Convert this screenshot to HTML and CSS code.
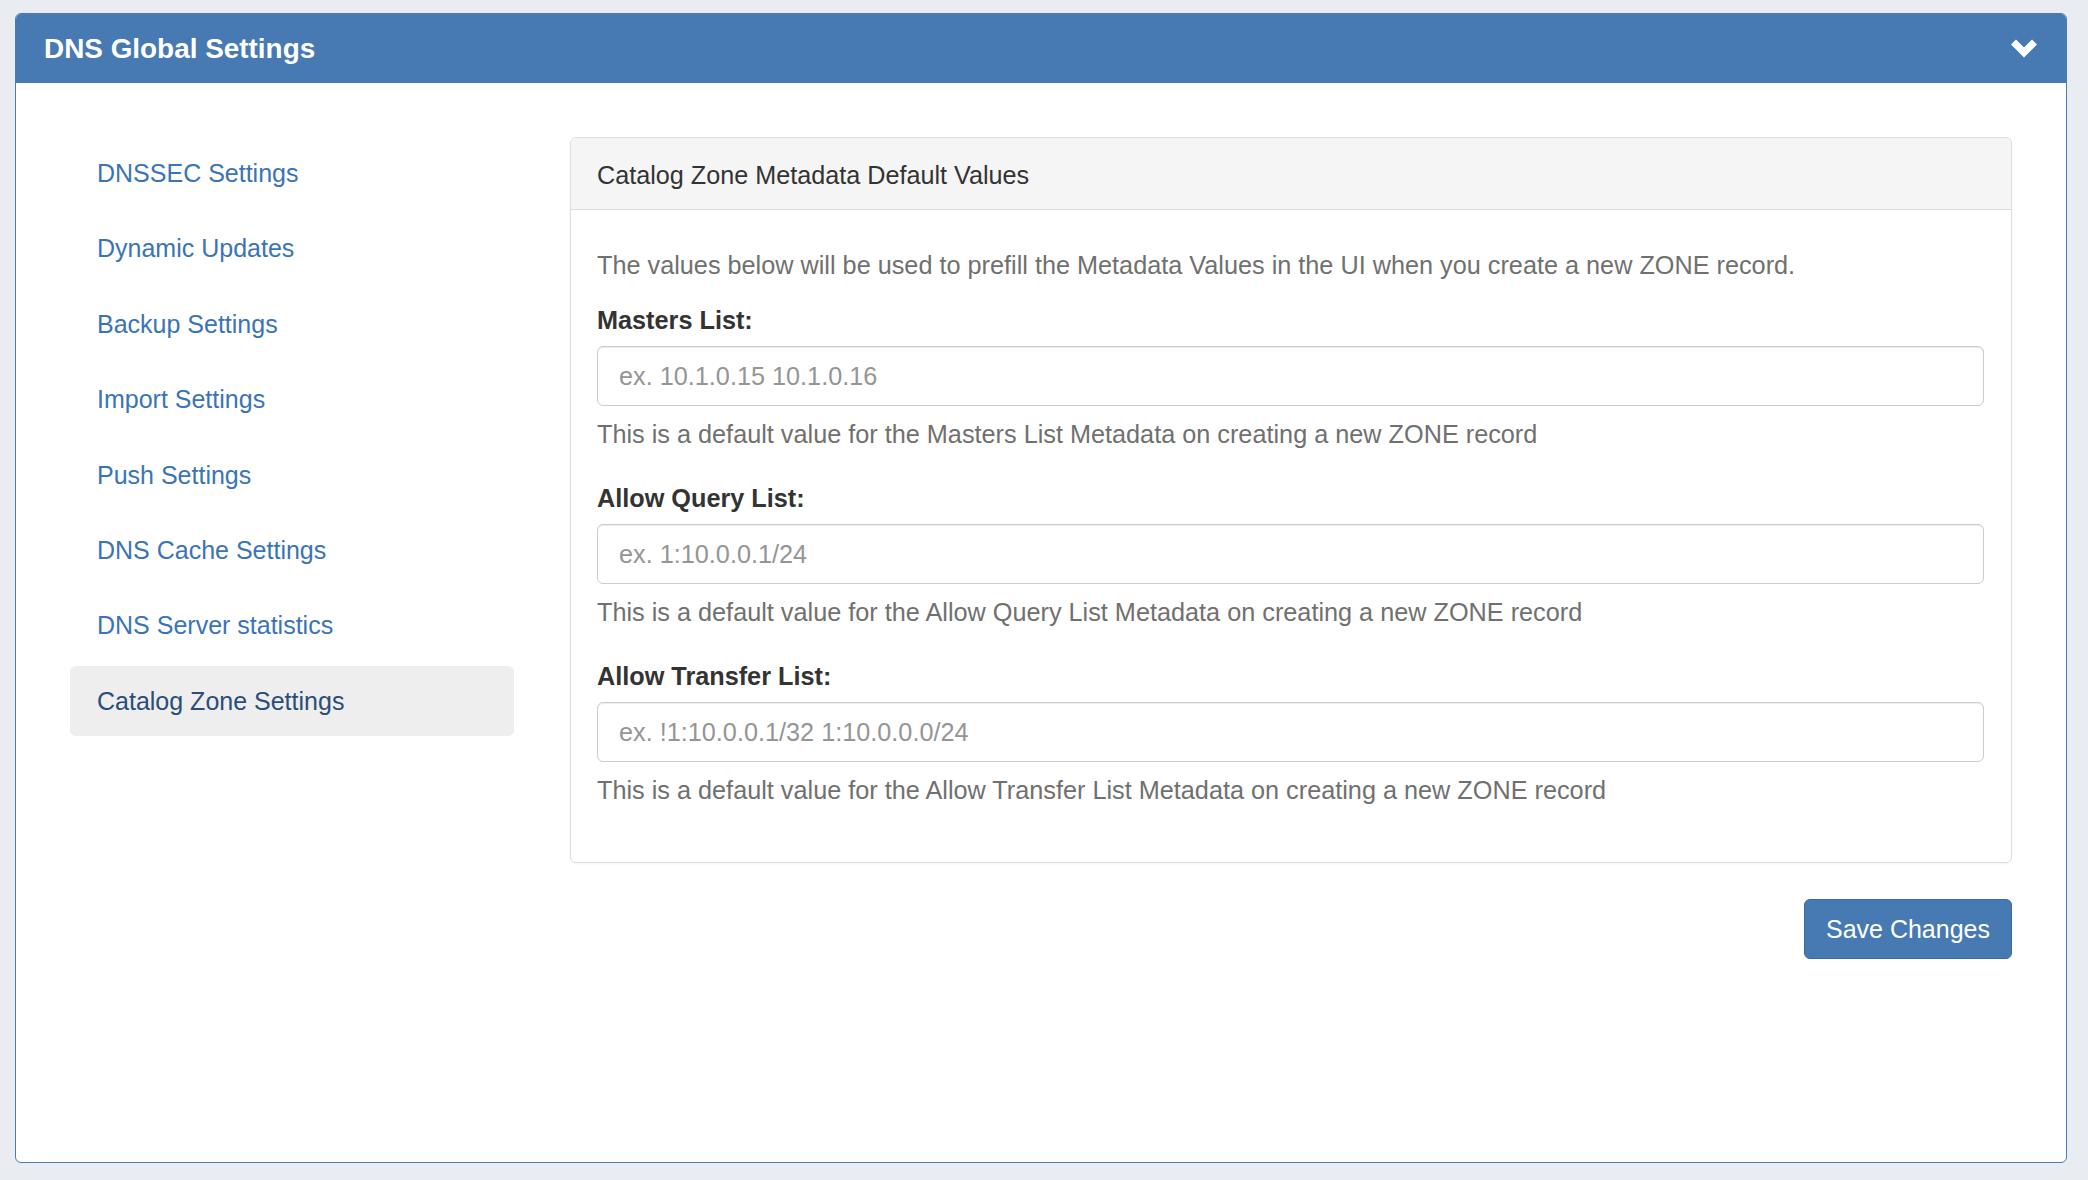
FILE: index.html
```html
<!DOCTYPE html>
<html lang="en">

<head>
    <meta charset="UTF-8">
    <meta name="viewport" content="width=device-width, initial-scale=1.0">
    <title>DNS Global Settings</title>
    <link rel="stylesheet" href="styles.css">
</head>

<body>
    <div class="panel">
        <div class="panel-heading">
            <h3 class="panel-title">DNS Global Settings</h3>
            <svg class="chevron" width="28" height="20" viewBox="0 0 28 20">
                <polyline points="3.5,3 14,13.5 24.5,3" fill="none" stroke="#fff" stroke-width="7" stroke-linejoin="miter"></polyline>
            </svg>
        </div>
        <div class="panel-body">
            <ul class="side-nav">
                <li><a href="#">DNSSEC Settings</a></li>
                <li><a href="#">Dynamic Updates</a></li>
                <li><a href="#">Backup Settings</a></li>
                <li><a href="#">Import Settings</a></li>
                <li><a href="#">Push Settings</a></li>
                <li><a href="#">DNS Cache Settings</a></li>
                <li><a href="#">DNS Server statistics</a></li>
                <li class="active"><a href="#">Catalog Zone Settings</a></li>
            </ul>
            <div class="content">
                <div class="card">
                    <div class="card-heading">Catalog Zone Metadata Default Values</div>
                    <div class="card-body">
                        <p class="intro">The values below will be used to prefill the Metadata Values in the UI when you create a new ZONE record.</p>
                        <div class="form-group">
                            <label for="masters">Masters List:</label>
                            <input type="text" id="masters" class="form-control" placeholder="ex. 10.1.0.15 10.1.0.16">
                            <span class="help-block">This is a default value for the Masters List Metadata on creating a new ZONE record</span>
                        </div>
                        <div class="form-group">
                            <label for="query">Allow Query List:</label>
                            <input type="text" id="query" class="form-control" placeholder="ex. 1:10.0.0.1/24">
                            <span class="help-block">This is a default value for the Allow Query List Metadata on creating a new ZONE record</span>
                        </div>
                        <div class="form-group">
                            <label for="transfer">Allow Transfer List:</label>
                            <input type="text" id="transfer" class="form-control" placeholder="ex. !1:10.0.0.1/32 1:10.0.0.0/24">
                            <span class="help-block">This is a default value for the Allow Transfer List Metadata on creating a new ZONE record</span>
                        </div>
                    </div>
                </div>
                <div class="actions">
                    <button class="btn">Save Changes</button>
                </div>
            </div>
        </div>
    </div>
</body>

</html>
```

FILE: styles.css
```css
* {
    box-sizing: border-box;
}

body {
    margin: 0;
    padding: 13px 21px 17px 15px;
    background-color: #e9edf1;
    font-family: "Liberation Sans", Arial, sans-serif;
    font-size: 25px;
    color: #333;
}

.panel {
    height: 1150px;
    background-color: #fff;
    border: 1px solid #4a7bb4;
    border-radius: 6px;
    overflow: hidden;
}

.panel-heading {
    height: 69px;
    background-color: #477ab3;
    display: flex;
    align-items: center;
    justify-content: space-between;
    padding: 0 28px;
}

.panel-title {
    margin: 0;
    color: #fff;
    font-size: 27.9px;
    font-weight: bold;
}

.chevron {
    display: block;
}

.panel-body {
    display: grid;
    grid-template-columns: 444px 1fr;
    column-gap: 56px;
    padding: 54px 54px;
}

.side-nav {
    list-style: none;
    margin: 1px 0 0 0;
    padding: 0;
}

.side-nav li {
    margin-bottom: 5.4px;
}

.side-nav a {
    display: block;
    height: 70px;
    line-height: 70px;
    padding: 0 27px;
    color: #3a74b6;
    text-decoration: none;
    border-radius: 6px;
}

.side-nav .active a {
    background-color: #eeeeee;
    color: #2b4d78;
}

.card {
    border: 1px solid #dddddd;
    border-radius: 6px;
    box-shadow: 0 1px 2px rgba(0, 0, 0, 0.05);
}

.card-heading {
    height: 72px;
    line-height: 70px;
    padding: 2px 26px 0 26px;
    background-color: #f5f5f5;
    border-bottom: 1px solid #dddddd;
    border-radius: 6px 6px 0 0;
    font-size: 25.2px;
}

.card-body {
    padding: 38px 27px 25px 26px;
    font-size: 25.25px;
}

.intro {
    margin: 0 0 21px 0;
    line-height: 34px;
    color: #707070;
}

.form-group {
    margin-bottom: 30px;
}

label {
    display: block;
    font-weight: bold;
    line-height: 34px;
    margin-bottom: 9px;
}

.form-control {
    display: block;
    width: 100%;
    height: 60px;
    padding: 0 21px;
    border: 1px solid #cccccc;
    border-radius: 6px;
    box-shadow: inset 0 1px 1px rgba(0, 0, 0, 0.075);
    font-family: "Liberation Sans", Arial, sans-serif;
    font-size: 25.25px;
    color: #555;
}

.form-control::placeholder {
    color: #959595;
}

.help-block {
    display: block;
    margin-top: 11px;
    line-height: 34px;
    color: #707070;
}

.actions {
    display: flex;
    justify-content: flex-end;
    margin-top: 36px;
}

.btn {
    height: 60px;
    width: 208px;
    background-color: #477ab3;
    border: 1px solid #3b6a9f;
    border-radius: 6px;
    color: #fff;
    font-family: "Liberation Sans", Arial, sans-serif;
    font-size: 25px;
}
```
